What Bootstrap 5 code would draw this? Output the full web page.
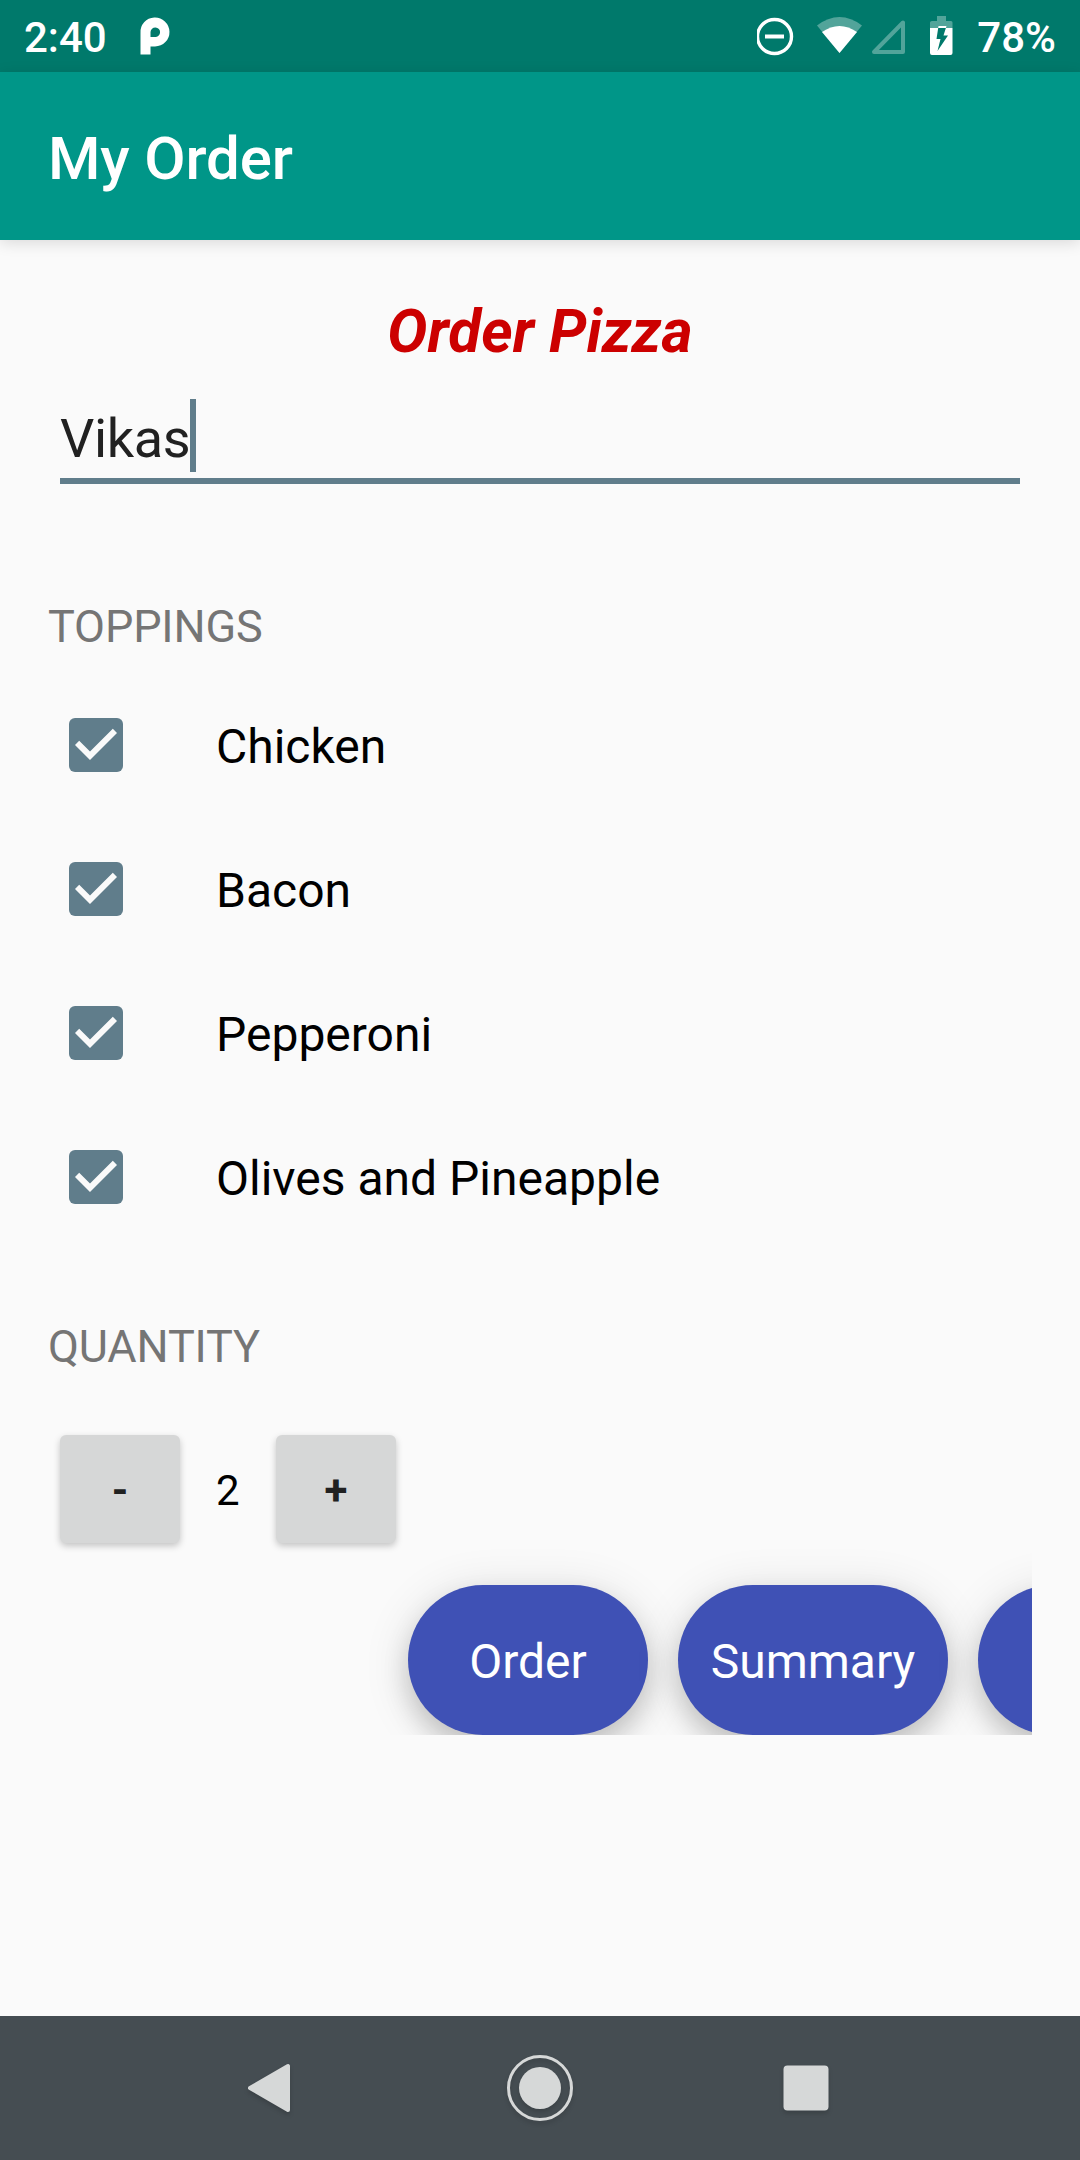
<!DOCTYPE html>
<html lang="en">
<head>
<meta charset="utf-8">
<meta name="viewport" content="width=device-width, initial-scale=1">
<title>My Order</title>
<link href="https://cdn.jsdelivr.net/npm/bootstrap@5.3.0/dist/css/bootstrap.min.css" rel="stylesheet">
<style>
  body { font-family: Roboto, "Liberation Sans", sans-serif; background: #fafafa; color: #000; height: 2160px; overflow: hidden; }
  svg { display: block; flex: none; }
  .status-bar { height: 72px; background: #00796b; color: #fff; font-size: 42px; font-weight: 500; line-height: 69px; padding: 0 24px; }
  .status-bar span { padding-top: 3px; }
  .app-mark { margin-left: 32px; }
  .app-bar { height: 168px; background: #009688; padding: 5px 48px 0; box-shadow: 0 3px 14px rgba(0,0,0,.13); }
  .app-bar .navbar-brand { font-size: 60px; font-weight: 500; line-height: 70px; letter-spacing: -.15px; color: #fff; }
  .order-form { padding: 57px 48px 0; }
  .order-title { font-size: 60px; font-weight: 700; font-style: italic; line-height: 70px; letter-spacing: .1px; color: #c00; }
  .name-field { margin: 32px 12px 0; height: 85px; border-bottom: 6px solid #607d8b; font-size: 54px; color: #212121; }
  .name-field span { line-height: 73px; padding-top: 3px; letter-spacing: -.4px; }
  .caret { width: 6px; height: 73px; background: #607d8b; }
  .section-label { font-size: 45px; font-weight: 400; line-height: 60px; letter-spacing: -.15px; color: #757575; }
  .toppings-label { margin-top: 113px; }
  .toppings { margin-top: 16px; }
  .topping { height: 144px; padding-left: 21px; gap: 93px; font-size: 48px; }
  .topping span { padding-top: 3px; }
  .quantity-label { margin-top: 68px; }
  .stepper { margin: 58px 12px 0; height: 108px; font-size: 42px; }
  .stepper .btn { width: 120px; height: 108px; padding: 3px 0 0; border: 0; border-radius: 6px; background: #d6d7d7; color: #212121; font-size: 42px; font-weight: 700; line-height: 105px; box-shadow: 0 3px 7px rgba(0,0,0,.22); }
  .stepper output { width: 96px; padding: 3px 0 0 36px; line-height: 105px; }
  .actions { height: 192px; padding: 42px 0 0 360px; gap: 30px; overflow: hidden; }
  .actions .btn { flex: none; width: 240px; height: 150px; border: 0; padding: 3px 0 0; border-radius: 75px; background: #3f51b5; color: #fff; font-size: 48px; line-height: 145px; box-shadow: 0 14px 26px rgba(0,0,0,.17), 0 6px 48px rgba(0,0,0,.12); }
  .actions .btn.wide { width: 270px; }
  .nav-keys { height: 144px; background: #454d52; }
  .nav-keys svg { filter: drop-shadow(0 3px 2px rgba(0,0,0,.15)); }
</style>
</head>
<body class="d-flex flex-column">
  <header>
    <div class="status-bar d-flex align-items-start">
      <span>2:40</span>
      <svg class="app-mark" width="32" height="72" viewBox="139 0 32 72" fill="#fff">
        <path fill-rule="evenodd" d="M140.500 54.500V33A14.500 14.500 0 1 1 155 46.500H150.500V54.500ZM150.500 37V32A4.800 4.800 0 1 1 155 37Z"/>
      </svg>
      <svg class="ms-auto" width="220" height="72" viewBox="757 0 220 72" fill="#fff">
        <circle cx="774.500" cy="36.500" r="17" fill="none" stroke="#fff" stroke-width="3.400"/>
        <path d="M765 34.500H784V38.500H765Z"/>
        <path opacity=".32" d="M839.500 53L817 25.500Q828 17 839.500 17T862 25.500Z"/>
        <path d="M839.500 53L822 32Q839.500 20 857 32Z"/>
        <path d="M874 52L903 22.500V52Z" fill="none" stroke="#fff" stroke-width="4" stroke-linejoin="round" opacity=".32"/>
        <path opacity=".32" d="M930 28V22.500Q930 21 932 21H937V16H946V21H951Q952.500 21 952.500 22.500V28Z"/>
        <path fill-rule="evenodd" d="M930 28H952.500V53Q952.500 55 950.500 55H932Q930 55 930 53ZM938.500 26L936.500 39H940.500L937.500 51L948 35.500H943.500L946.500 26Z"/>
      </svg>
      <span>78%</span>
    </div>
    <nav class="app-bar navbar"><span class="navbar-brand m-0 p-0">My Order</span></nav>
  </header>

  <main class="order-form flex-grow-1">
    <h1 class="order-title text-center m-0">Order Pizza</h1>
    <div class="name-field d-flex align-items-start"><span>Vikas</span><i class="caret"></i></div>

    <h2 class="section-label toppings-label mb-0">TOPPINGS</h2>
    <div class="toppings">
      <div class="topping d-flex align-items-center">
        <svg width="54" height="54"><rect width="54" height="54" rx="6" fill="#607d8b"/><path d="M21 42L6 27L10.200 22.800L21 33.500L43.800 10.700L48 15Z" fill="#fafafa"/></svg>
        <span>Chicken</span>
      </div>
      <div class="topping d-flex align-items-center">
        <svg width="54" height="54"><rect width="54" height="54" rx="6" fill="#607d8b"/><path d="M21 42L6 27L10.200 22.800L21 33.500L43.800 10.700L48 15Z" fill="#fafafa"/></svg>
        <span>Bacon</span>
      </div>
      <div class="topping d-flex align-items-center">
        <svg width="54" height="54"><rect width="54" height="54" rx="6" fill="#607d8b"/><path d="M21 42L6 27L10.200 22.800L21 33.500L43.800 10.700L48 15Z" fill="#fafafa"/></svg>
        <span>Pepperoni</span>
      </div>
      <div class="topping d-flex align-items-center">
        <svg width="54" height="54"><rect width="54" height="54" rx="6" fill="#607d8b"/><path d="M21 42L6 27L10.200 22.800L21 33.500L43.800 10.700L48 15Z" fill="#fafafa"/></svg>
        <span>Olives and Pineapple</span>
      </div>
    </div>

    <h2 class="section-label quantity-label mb-0">QUANTITY</h2>
    <div class="stepper d-flex">
      <button class="btn" type="button">-</button>
      <output>2</output>
      <button class="btn" type="button">+</button>
    </div>
    <div class="actions d-flex">
      <button class="btn" type="button">Order</button>
      <button class="btn wide" type="button">Summary</button>
      <button class="btn" type="button"></button>
    </div>
  </main>

  <footer class="nav-keys d-flex justify-content-center align-items-center">
    <svg width="600" height="144" viewBox="240 0 600 144" fill="#d6d8d8">
      <path d="M250 72L288 50V94Z" stroke="#d6d8d8" stroke-width="4" stroke-linejoin="round"/>
      <circle cx="540" cy="72" r="31.500" fill="none" stroke="#d6d8d8" stroke-width="3"/>
      <circle cx="540" cy="72" r="21"/>
      <rect x="783.500" y="49.500" width="45" height="45" rx="4"/>
    </svg>
  </footer>
<script src="https://cdn.jsdelivr.net/npm/bootstrap@5.3.0/dist/js/bootstrap.bundle.min.js"></script>
</body>
</html>
